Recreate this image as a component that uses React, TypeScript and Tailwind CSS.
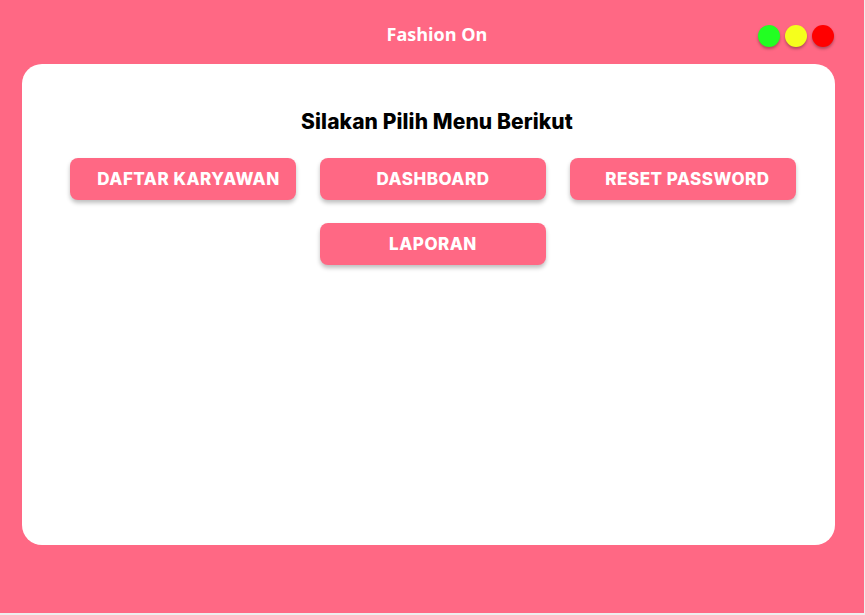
const menus = ["DAFTAR KARYAWAN", "DASHBOARD", "RESET PASSWORD", "LAPORAN"];

function MenuButton({ label, className = "" }: { label: string; className?: string }) {
  return (
    <button
      className={`h-[42px] w-[226px] rounded-lg bg-[#ff6884] text-white text-[17px] font-extrabold tracking-[0.5px] pt-[2px] shadow-[0_3px_4px_rgba(0,0,0,0.25)] ${className}`}
    >
      {label}
    </button>
  );
}

export default function App() {
  return (
    <div className="w-[865px] h-[615px] bg-[#eeeeee] font-['Inter',sans-serif]">
      <div className="w-[864px] h-[613px] bg-[#ff6884] flex flex-col">
        <header className="relative h-[64px] flex items-start justify-center pt-[21px]">
          <h1 className="text-white text-[18px] font-bold font-['Open_Sans',sans-serif] ml-[10px] leading-[26px]">
            Fashion On
          </h1>
          <div className="absolute right-[30px] top-[25px] flex gap-[5px]">
            <span className="w-[22px] h-[22px] rounded-full bg-[#22ff22] shadow-[0_2px_3px_rgba(0,0,0,0.3)]" />
            <span className="w-[22px] h-[22px] rounded-full bg-[#f5ff1c] shadow-[0_2px_3px_rgba(0,0,0,0.3)]" />
            <span className="w-[22px] h-[22px] rounded-full bg-[#ff0000] shadow-[0_2px_3px_rgba(0,0,0,0.3)]" />
          </div>
        </header>
        <main className="mx-[22px] w-[813px] h-[481px] bg-white rounded-[20px] flex flex-col items-center pt-[44px]">
          <h2 className="text-[21px] font-extrabold text-black ml-[17px] leading-[28px] tracking-[0.1px]">
            Silakan Pilih Menu Berikut
          </h2>
          <div className="mt-[22px] ml-[9px] grid grid-cols-[226px_226px_226px] gap-x-[24px] gap-y-[23px]">
            <MenuButton label={menus[0]} className="pl-[11px]" />
            <MenuButton label={menus[1]} />
            <MenuButton label={menus[2]} className="pl-[9px]" />
            <MenuButton label={menus[3]} className="col-start-2" />
          </div>
        </main>
      </div>
    </div>
  );
}
